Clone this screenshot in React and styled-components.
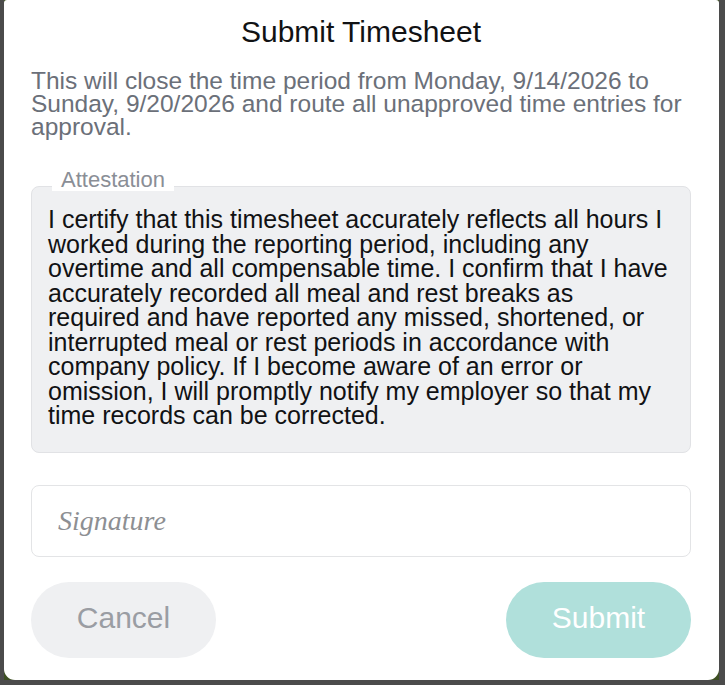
import styled, { createGlobalStyle } from "styled-components";

const GlobalStyle = createGlobalStyle`
  html, body {
    margin: 0;
    padding: 0;
    background: #4b4b4b;
  }
  * {
    box-sizing: border-box;
  }
`;

const Frame = styled.div`
  width: 725px;
  height: 685px;
  padding: 0 6px 5px 4px;
  background: #4b4b4b;
`;

const Backdrop = styled.div`
  height: 100%;
  background: #3d4f22;
`;

const Modal = styled.div`
  height: 100%;
  display: flex;
  flex-direction: column;
  padding: 14px 28px 22px 27px;
  background: #ffffff;
  border-radius: 3px 3px 11px 11px;
  font-family: "Liberation Sans", Arial, sans-serif;
`;

const Title = styled.h2`
  margin: 0;
  font-size: 30px;
  line-height: 36px;
  font-weight: 400;
  text-align: center;
  color: #111214;
`;

const Description = styled.p`
  margin: 19px 0 0;
  font-size: 24.5px;
  line-height: 23px;
  color: #6b7079;
`;

const Field = styled.div`
  position: relative;
  margin-top: 48px;
`;

const Legend = styled.span`
  position: absolute;
  top: -18px;
  left: 21px;
  padding: 0 9px;
  background: #ffffff;
  font-size: 22px;
  line-height: 23px;
  color: #8a8e96;
`;

const Attestation = styled.div`
  padding: 20px 20px 24px 16px;
  background: #eff0f2;
  border: 1px solid #e1e2e5;
  border-radius: 8px;
  font-size: 25px;
  line-height: 24.5px;
  color: #111214;
`;

const SignatureInput = styled.input`
  display: block;
  width: 100%;
  height: 73px;
  margin-top: 32px;
  padding: 0 26px;
  border: 1.5px solid #e3e4e6;
  border-radius: 8px;
  background: #ffffff;
  font-family: "Liberation Serif", "DejaVu Serif", serif;
  font-style: italic;
  font-size: 28px;
  color: #333;
  outline: none;

  &::placeholder {
    color: #8d8f93;
  }
`;

const Actions = styled.div`
  display: flex;
  justify-content: space-between;
  margin-top: 25px;
`;

const Button = styled.button`
  width: 185px;
  height: 76px;
  padding: 0 0 4px;
  border: none;
  border-radius: 38px;
  font-family: "Liberation Sans", Arial, sans-serif;
  font-size: 30px;
  background: ${({ $primary }) => ($primary ? "#b0e0db" : "#eff0f2")};
  color: ${({ $primary }) => ($primary ? "#ffffff" : "#9a9da3")};
  cursor: pointer;
`;

const App = () => {
  return (
    <>
      <GlobalStyle />
      <Frame>
        <Backdrop>
          <Modal>
            <Title>Submit Timesheet</Title>
            <Description>
              This will close the time period from Monday, 9/14/2026 to
              Sunday, 9/20/2026 and route all unapproved time entries for
              approval.
            </Description>
            <Field>
              <Legend>Attestation</Legend>
              <Attestation>
                I certify that this timesheet accurately reflects all hours I
                worked during the reporting period, including any overtime and
                all compensable time. I confirm that I have accurately recorded
                all meal and rest breaks as required and have reported any
                missed, shortened, or interrupted meal or rest periods in
                accordance with company policy. If I become aware of an error or
                omission, I will promptly notify my employer so that my time
                records can be corrected.
              </Attestation>
            </Field>
            <SignatureInput placeholder="Signature" />
            <Actions>
              <Button>Cancel</Button>
              <Button $primary disabled>
                Submit
              </Button>
            </Actions>
          </Modal>
        </Backdrop>
      </Frame>
    </>
  );
};

export default App;
